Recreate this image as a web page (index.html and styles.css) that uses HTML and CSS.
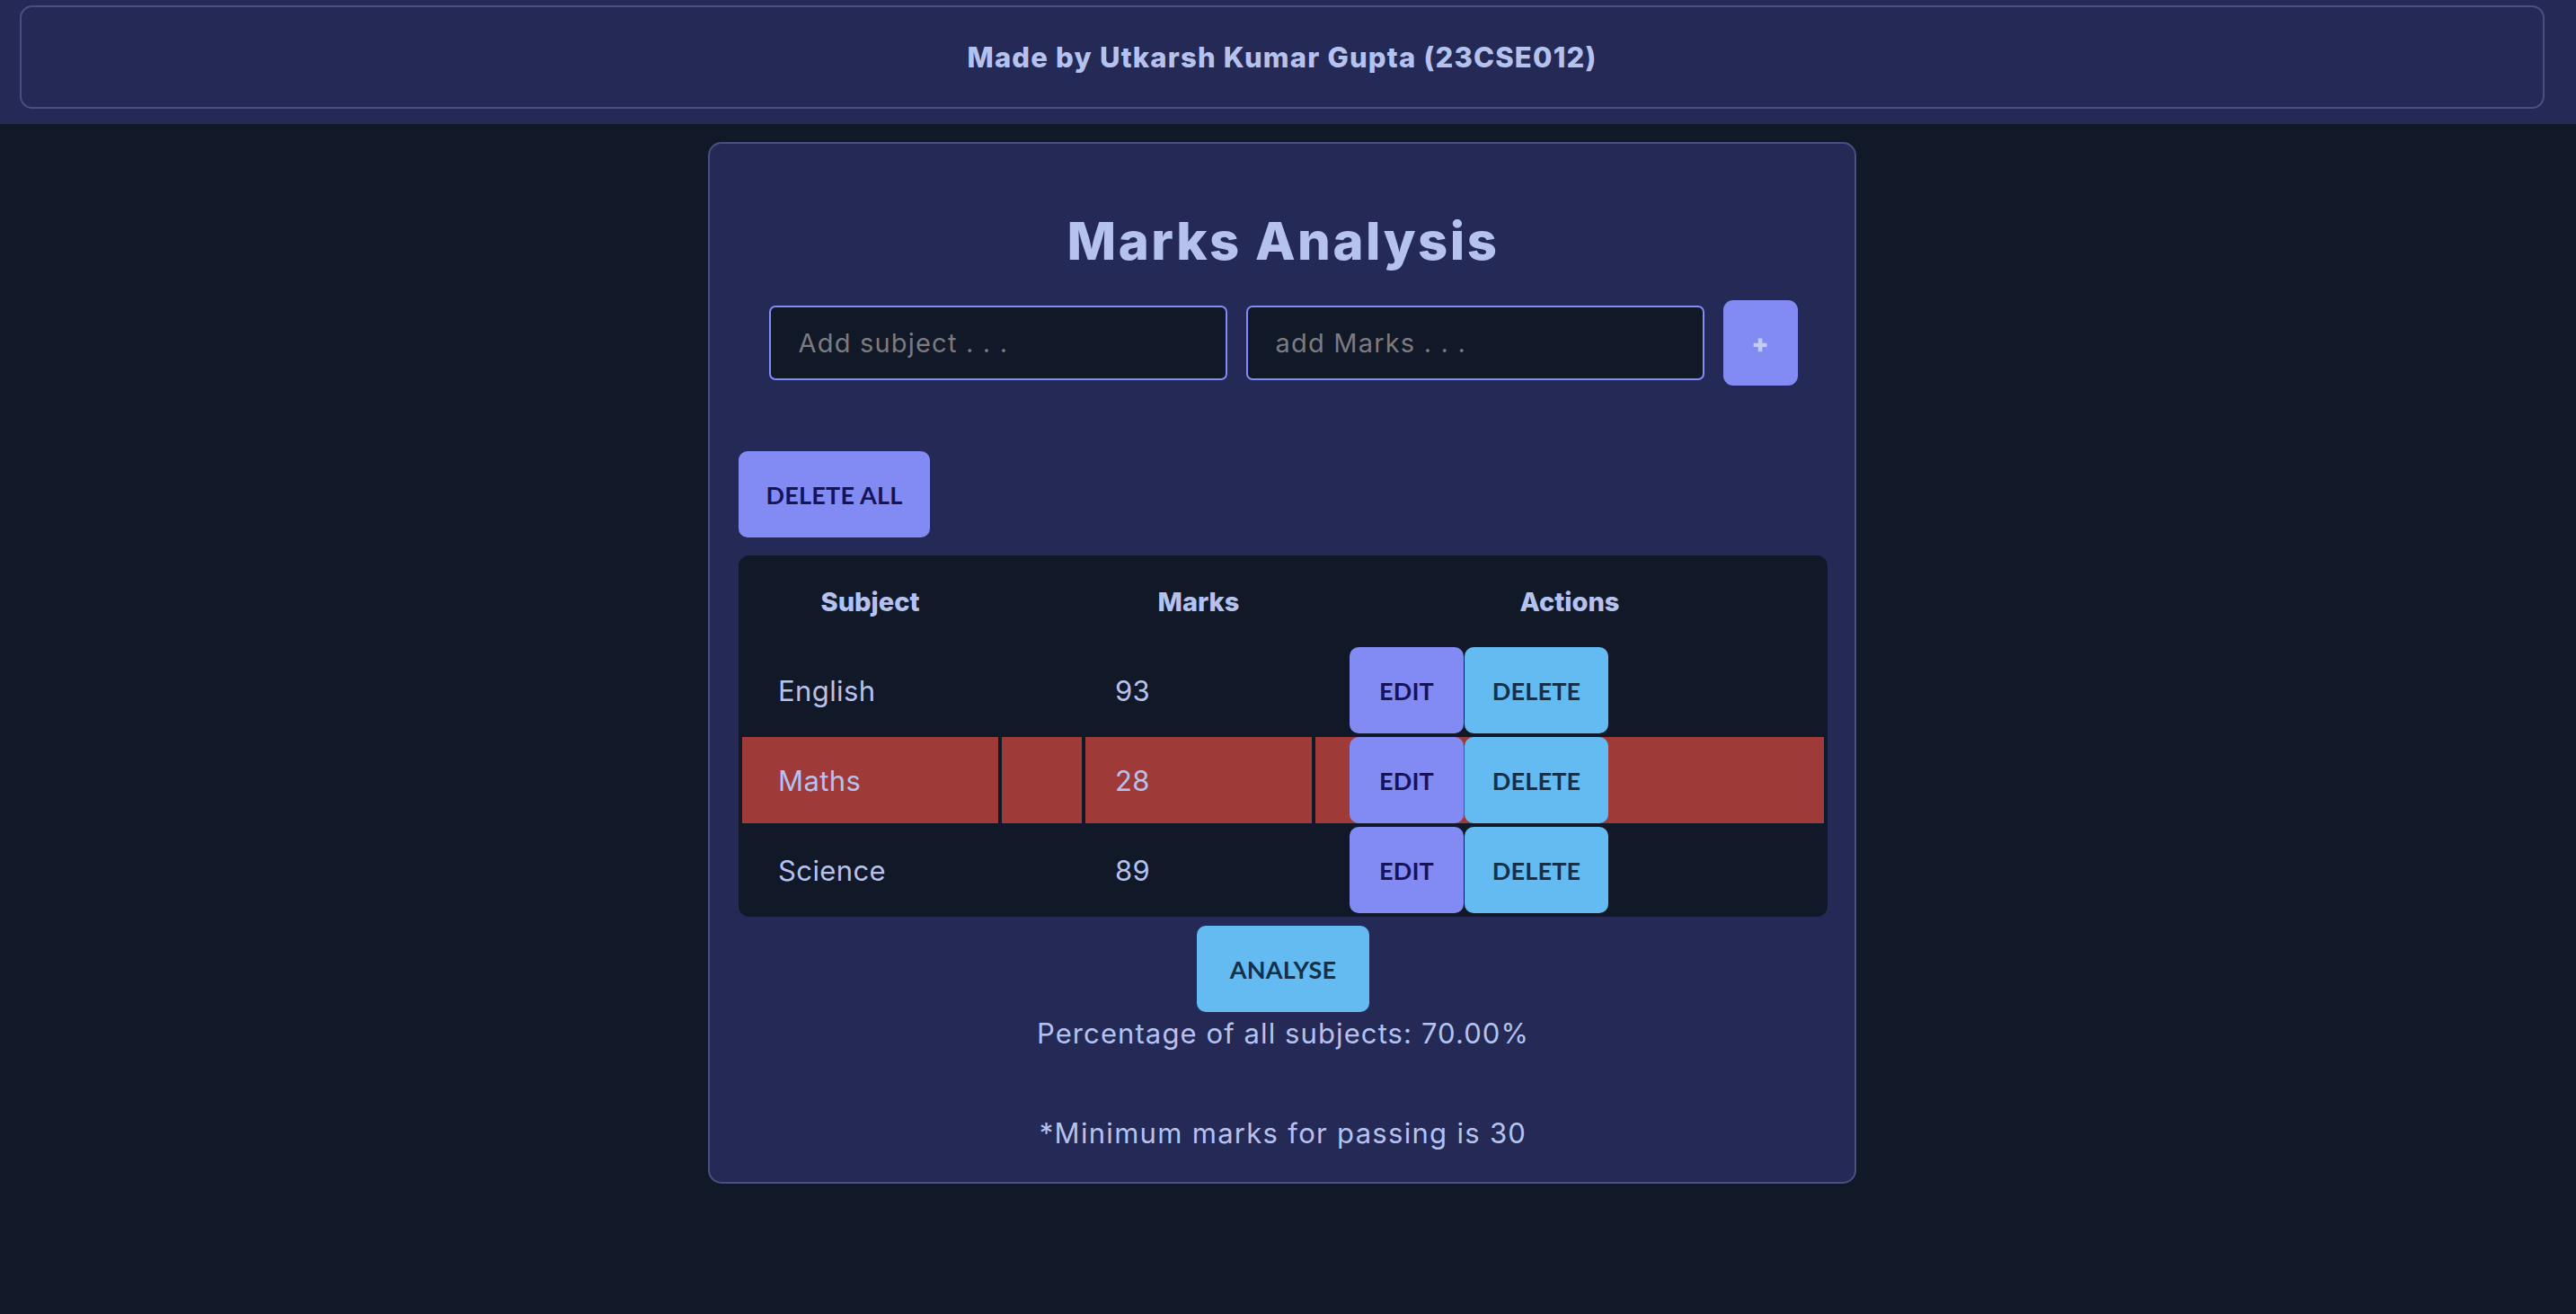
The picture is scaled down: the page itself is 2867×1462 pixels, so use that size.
FILE: index.html
```html
<!DOCTYPE html>
<html lang="en">
<head>
<meta charset="utf-8">
<title>Marks Analysis</title>
<link rel="stylesheet" href="styles.css">
</head>
<body>
<header class="topbar">
  <div class="credit">Made by Utkarsh Kumar Gupta (23CSE012)</div>
</header>
<main class="page">
  <section class="card">
    <h1 class="title">Marks Analysis</h1>
    <div class="entry">
      <input class="field" type="text" placeholder="Add subject . . .">
      <input class="field" type="text" placeholder="add Marks . . .">
      <button class="add-btn" type="button">+</button>
    </div>
    <button class="btn btn-indigo delete-all" type="button">DELETE ALL</button>
    <table class="marks">
      <colgroup>
        <col class="c-subject">
        <col class="c-gap">
        <col class="c-marks">
        <col class="c-actions">
      </colgroup>
      <thead>
        <tr class="head-row">
          <th>Subject</th>
          <th></th>
          <th>Marks</th>
          <th>Actions</th>
        </tr>
      </thead>
      <tbody>
        <tr class="row">
          <td class="subj">English</td>
          <td></td>
          <td class="num">93</td>
          <td class="acts"><div class="act-group"><button class="btn btn-indigo btn-edit" type="button">EDIT</button><button class="btn btn-sky btn-del" type="button">DELETE</button></div></td>
        </tr>
        <tr class="row fail">
          <td class="subj">Maths</td>
          <td></td>
          <td class="num">28</td>
          <td class="acts"><div class="act-group"><button class="btn btn-indigo btn-edit" type="button">EDIT</button><button class="btn btn-sky btn-del" type="button">DELETE</button></div></td>
        </tr>
        <tr class="row">
          <td class="subj">Science</td>
          <td></td>
          <td class="num">89</td>
          <td class="acts"><div class="act-group"><button class="btn btn-indigo btn-edit" type="button">EDIT</button><button class="btn btn-sky btn-del" type="button">DELETE</button></div></td>
        </tr>
      </tbody>
    </table>
    <div class="analyse-wrap">
      <button class="btn btn-sky analyse" type="button">ANALYSE</button>
    </div>
    <p class="result">Percentage of all subjects: 70.00%</p>
    <p class="note">*Minimum marks for passing is 30</p>
  </section>
</main>
</body>
</html>
```

FILE: styles.css
```css
* { box-sizing: border-box; }

html, body {
  margin: 0;
  padding: 0;
}

body {
  background: #111827;
  color: #b6c2ee;
  font-family: "Inter", "Open Sans", sans-serif;
  min-height: 1462px;
}

.topbar {
  background: #252956;
  padding: 6px 35px 17px 22px;
}

.credit {
  height: 115px;
  border: 2px solid #4b4f80;
  border-radius: 14px;
  display: flex;
  align-items: center;
  justify-content: center;
  font-size: 31px;
  font-weight: 800;
  letter-spacing: 1.2px;
  color: #b6c2ee;
}

.page {
  display: flex;
  justify-content: center;
  padding-right: 13px;
}

.card {
  width: 1278px;
  margin-top: 20px;
  background: #252956;
  border: 2px solid #4b4f80;
  border-radius: 15px;
  padding: 0 30px 30px 32px;
  display: flex;
  flex-direction: column;
}

.title {
  margin: 68px 0 0;
  height: 80px;
  line-height: 80px;
  text-align: center;
  font-size: 58px;
  font-weight: 800;
  letter-spacing: 2.5px;
  color: #b6c2ee;
}

.entry {
  margin-top: 26px;
  display: flex;
  justify-content: center;
  align-items: center;
  gap: 21px;
}

.field {
  width: 510px;
  height: 83px;
  background: #111827;
  border: 2px solid #818cf8;
  border-radius: 7px;
  padding: 0 31px;
  font-family: "Inter", "Open Sans", sans-serif;
  font-size: 29px;
  letter-spacing: 1.2px;
  color: #b6c2ee;
  outline: none;
}

.field::placeholder {
  color: #7b7b80;
}

.add-btn {
  width: 83px;
  height: 95px;
  border: none;
  border-radius: 11px;
  background: #828bf3;
  color: #c4ccf4;
  font-family: "Inter", sans-serif;
  font-size: 28px;
  font-weight: 900;
  padding: 0;
}

.btn {
  border: none;
  border-radius: 10px;
  height: 96px;
  padding: 0;
  font-family: "Lato", "Inter", sans-serif;
  font-weight: 700;
  font-size: 27px;
  letter-spacing: 0.2px;
}

.btn-indigo {
  background: #828bf3;
  color: #15135a;
}

.btn-sky {
  background: #63bbf1;
  color: #14304a;
}

.delete-all {
  margin-top: 73px;
  width: 213px;
  align-self: flex-start;
}

.marks {
  margin-top: 20px;
  width: 1212px;
  table-layout: fixed;
  border-collapse: separate;
  border-spacing: 4px;
  background: #111827;
  border-radius: 12px;
}

.c-subject { width: 285px; }
.c-gap { width: 89px; }
.c-marks { width: 252px; }
.c-actions { width: 566px; }

.head-row th {
  height: 94px;
  padding: 0;
  text-align: center;
  font-size: 29px;
  font-weight: 800;
  letter-spacing: 0;
  color: #b6c2ee;
}

.row td {
  height: 96px;
  padding: 0;
  font-size: 31px;
  font-weight: 400;
  letter-spacing: 0.4px;
  color: #b6c2ee;
}

.row.fail td {
  background: #9e3b38;
}

.row td.subj { padding-left: 40px; }
.row td.num { padding-left: 33px; }
.row td.acts { padding-left: 38px; }

.act-group {
  display: flex;
  gap: 1px;
  height: 96px;
}

.btn-edit { width: 127px; }
.btn-del { width: 160px; }

.analyse-wrap {
  margin-top: 10px;
  display: flex;
  justify-content: center;
}

.analyse {
  width: 192px;
}

.result,
.note {
  margin: 0;
  height: 48px;
  line-height: 48px;
  text-align: center;
  font-size: 31px;
  letter-spacing: 1.1px;
  color: #b6c2ee;
}

.note {
  margin-top: 63px;
  letter-spacing: 1.3px;
}
```
